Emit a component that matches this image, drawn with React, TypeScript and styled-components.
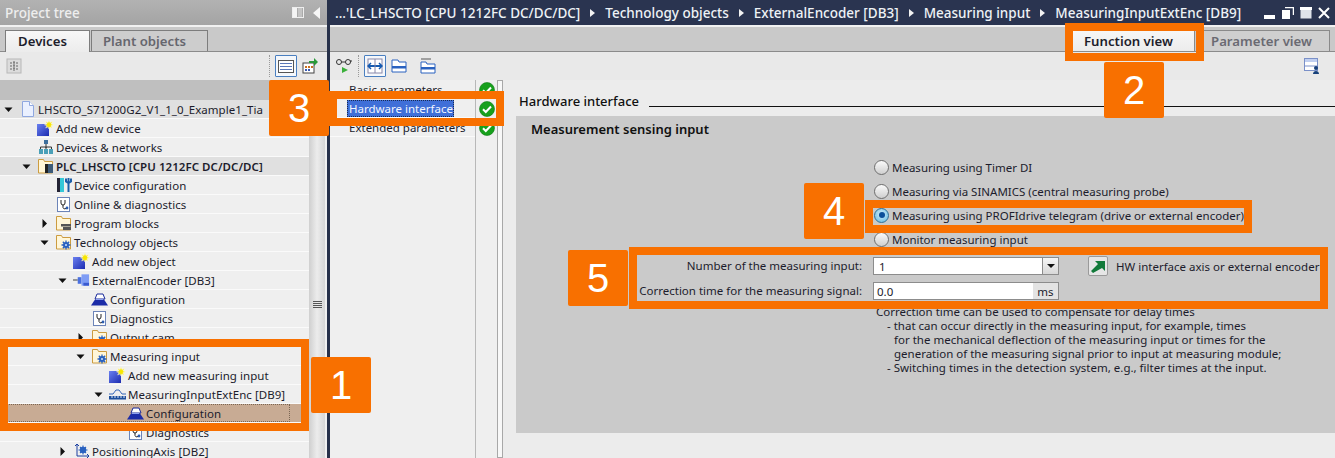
import React from 'react';
import styled, { createGlobalStyle } from 'styled-components';

const Global = createGlobalStyle`
  html, body { margin: 0; padding: 0; background: #ececec; }
  #root { width: 1335px; height: 458px; overflow: hidden; }
`;
const FONT = `"Noto Sans", "DejaVu Sans", sans-serif`;
const ORANGE = '#f87000';

const Page = styled.div`
  position: relative; width: 1335px; height: 458px; overflow: hidden;
  display: flex; font-family: ${FONT}; font-size: 11.5px; color: #1c1c2c;
`;
const LeftPanel = styled.div`width: 327px; flex: none; display: flex; flex-direction: column; background: #ececec;`;
const Divider = styled.div`width: 3px; flex: none; background: #27314a;`;
const RightPanel = styled.div`flex: 1; min-width: 0; display: flex; flex-direction: column; background: #ececec;`;

const ProjectHeader = styled.div`
  height: 25px; flex: none; box-sizing: border-box; padding: 0 5px; display: flex; align-items: center; justify-content: space-between;
  background: linear-gradient(#b2b2b2, #a4a4a4); color: #eeeeee; font-size: 13.5px; font-weight: 500;
`;
const HeaderIcons = styled.div`display: flex; align-items: center; gap: 9px; margin-right: 2px;`;
const TabStrip = styled.div`
  height: 27px; flex: none; box-sizing: border-box; border-top: 2px solid #f1f1f1; border-bottom: 1px solid #8b8b8b;
  background: #c9c9c9; display: flex; align-items: flex-end; padding-left: 5px; gap: 1px;
`;
const TreeTab = styled.div<{ $active?: boolean; $w: number }>`
  width: ${p => p.$w}px; height: ${p => (p.$active ? 22 : 21)}px; box-sizing: border-box; display: flex; align-items: center; justify-content: center;
  padding: 0 10px 1px 0;
  font-size: 13.2px; font-weight: 600; color: ${p => (p.$active ? '#1e1e2c' : '#66666e')};
  border: 1px solid #7d7d7d; border-bottom: 0;
  background: ${p => (p.$active ? 'linear-gradient(#f7f7f7,#ececec)' : '#cdcdcd')};
  margin-bottom: ${p => (p.$active ? -1 : 0)}px; position: relative;
`;
const TreeToolbar = styled.div`
  height: 28px; flex: none; box-sizing: border-box; display: flex; align-items: center; justify-content: space-between; padding: 0 9px 0 6px; background: #e9e9e9;
`;
const ToolGroup = styled.div`display: flex; align-items: center; gap: 5px;`;
const ToolSep = styled.div`width: 0; height: 22px; border-left: 1px dotted #9a9a9a;`;
const ToolGap = styled.span`width: 3px; flex: none;`;
const ToolButton = styled.div<{ $on?: boolean }>`
  width: 22px; height: 22px; box-sizing: border-box; display: flex; align-items: center; justify-content: center;
  border: 1px solid ${p => (p.$on ? '#4a7fc0' : 'transparent')}; background: ${p => (p.$on ? '#f4f7fb' : 'transparent')}; border-radius: 1px;
`;
const GreyBar = styled.div`height: 20px; flex: none; background: #bfbfbf;`;
const TreeArea = styled.div`flex: 1; min-height: 0; display: flex; overflow: hidden;`;
const TreeRows = styled.div`width: 309px; flex: none; position: relative; display: flex; flex-direction: column;`;
const TreeGuide = styled.div`position: absolute; left: 288px; top: 0; bottom: 0; width: 1px; background: #bdbdbd;`;
const TreeRow = styled.div<{ $level: number; $tone?: 'head' | 'selected' }>`
  height: 19px; flex: none; box-sizing: border-box; display: flex; align-items: center; position: relative;
  padding-left: ${p => 4 + p.$level * 18}px; white-space: nowrap; overflow: hidden;
  border-bottom: 1px solid #fafafa;
  background: ${p => (p.$tone === 'head' ? '#e0e0e0' : p.$tone === 'selected' ? '#c8ab94' : '#efefef')};
  ${p => p.$tone === 'selected' ? `&::after { content: ''; position: absolute; left: 0; top: 0; bottom: 0; width: 290px; border: 1px dotted #7a6654; box-sizing: border-box; }` : ''}
`;
const Twisty = styled.span`width: 15px; height: 10px; flex: none; display: flex; align-items: center; justify-content: flex-start;`;
const RowIcon = styled.span`width: 17px; height: 16px; flex: none; margin-right: 2px; display: flex; align-items: center; justify-content: center;`;
const RowText = styled.span<{ $strong?: boolean }>`font-weight: ${p => (p.$strong ? 600 : 400)}; letter-spacing: 0.05px;`;
const ScrollTrack = styled.div`
  flex: 1; display: flex; align-items: center; justify-content: center;
  background: linear-gradient(90deg, #cfcfcf, #ececec 50%, #d6d6d6);
`;
const Grip = styled.div`
  width: 9px; height: 7px; margin-top: 50px;
  background: repeating-linear-gradient(#555 0 1px, transparent 1px 2px);
`;
const LeftEdge = styled.div`width: 2px; flex: none; background: #f0f0f0;`;

const TitleBar = styled.div`
  height: 25px; flex: none; display: flex; align-items: center; justify-content: space-between; padding: 0 5px;
  background: #2a3450; color: #eef2f6; font-size: 13.5px; font-weight: 500; white-space: nowrap;
`;
const Crumbs = styled.div`display: flex; align-items: center; gap: 10px;`;
const CrumbArrow = styled.span`width: 0; height: 0; border-left: 5px solid #f2f2f2; border-top: 4.5px solid transparent; border-bottom: 4.5px solid transparent;`;
const WindowButtons = styled.div`display: flex; align-items: center; gap: 6px;`;
const ViewStrip = styled.div`
  height: 27px; flex: none; box-sizing: border-box; border-top: 2px solid #f1f1f1; border-bottom: 1px solid #8b8b8b; background: #c9c9c9;
  display: flex; justify-content: flex-end; align-items: flex-end; padding-right: 5px; gap: 8px;
`;
const ViewTab = styled.div<{ $active?: boolean; $w: number }>`
  width: ${p => p.$w}px; height: 21px; box-sizing: border-box; display: flex; align-items: center; justify-content: center;
  padding: 0 10px 1px 0;
  font-size: 13.2px; font-weight: 600; color: ${p => (p.$active ? '#1e1e2c' : '#6a6a72')};
  border: 1px solid #8a8a8a; border-bottom: 0; background: ${p => (p.$active ? 'linear-gradient(#f6f6f6,#ececec)' : '#cfcfcf')};
`;
const EditorToolbar = styled.div`
  height: 28px; flex: none; display: flex; align-items: center; justify-content: space-between; padding: 0 15px 0 5px; background: #e9e9e9;
`;
const EditorBody = styled.div`flex: 1; min-height: 0; display: flex;`;
const NavColumn = styled.div`width: 146px; flex: none; box-sizing: border-box; background: #efefef; border-right: 1px solid #b8b8b8; display: flex; flex-direction: column;`;
const NavRow = styled.div`height: 19px; flex: none; box-sizing: border-box; padding-left: 19px; display: flex; align-items: center; border-bottom: 1px solid #fafafa;`;
const NavLabel = styled.span<{ $sel?: boolean }>`
  ${p => p.$sel ? `background:#3f6fd8;color:#f2f6ff;outline:1px dotted #1a2a50;outline-offset:-1px;margin-left:-2px;padding:0 1px 0 2px;` : ''}
  line-height: 17px; white-space: nowrap;
`;
const StatusColumn = styled.div`width: 21px; flex: none; background: #efefef; display: flex; flex-direction: column;`;
const StatusCell = styled.div`height: 19px; flex: none; display: flex; align-items: center; justify-content: center;`;
const NavScroll = styled.div`width: 6px; flex: none; box-sizing: border-box; background: #f8f8f8; border: 1px solid #a8a8a8;`;
const Content = styled.div`flex: 1; min-width: 0; box-sizing: border-box; padding: 11px 0 0 13px; display: flex; flex-direction: column;`;
const SectionHead = styled.div`display: flex; align-items: flex-start; gap: 10px; height: 25px; padding-left: 3px; font-size: 13px; font-weight: 500; color: #101010; line-height: 20px;`;
const HeadLine = styled.div`flex: 1; height: 1px; background: #111; margin-top: 15px;`;
const GreyPanel = styled.div`height: 317px; flex: none; box-sizing: border-box; background: #cacaca; padding-left: 15px; display: flex; flex-direction: column;`;
const PanelTitle = styled.div`height: 26px; display: flex; align-items: center; font-size: 13px; font-weight: 600; color: #101010;`;
const RadioGroup = styled.div`margin: 13px 0 0 343px; display: flex; flex-direction: column;`;
const RadioRow = styled.div`height: 24px; display: flex; align-items: center; gap: 3px; white-space: nowrap;`;
const RadioDot = styled.span<{ $on?: boolean }>`
  width: 15px; height: 15px; box-sizing: border-box; border-radius: 50%; flex: none; display: flex; align-items: center; justify-content: center;
  border: 1px solid ${p => (p.$on ? '#2f6f96' : '#6e6e6e')};
  background: ${p => (p.$on ? 'radial-gradient(circle at 50% 40%, #d5f0fb, #5cb6e0)' : 'linear-gradient(#fafafa,#cfcfcf)')};
  &::after { content: ''; display: ${p => (p.$on ? 'block' : 'none')}; width: 6px; height: 6px; border-radius: 50%; background: #0b4f9a; }
`;
const FormGrid = styled.div`margin-top: 5px; display: grid; grid-template-columns: 331px 186px auto; column-gap: 11px; row-gap: 6px; align-items: center;`;
const FormLabel = styled.div`text-align: right; white-space: nowrap; height: 18px; line-height: 18px;`;
const SelectBox = styled.div`height: 18px; box-sizing: border-box; background: #fff; border: 1px solid #8c8c8c; display: flex; align-items: center; justify-content: space-between; padding-left: 5px;`;
const SelectArrow = styled.div`width: 16px; height: 16px; box-sizing: border-box; border-left: 1px solid #8c8c8c; background: linear-gradient(#f6f6f6,#d8d8d8); display: flex; align-items: center; justify-content: center;
  &::after { content: ''; border-top: 4px solid #111; border-left: 4px solid transparent; border-right: 4px solid transparent; }
`;
const InputBox = styled.div`height: 18px; box-sizing: border-box; background: #fff; border: 1px solid #8c8c8c; display: flex; align-items: center; justify-content: space-between; padding-left: 3px;`;
const UnitBox = styled.div`width: 25px; height: 16px; background: #e3e3e3; display: flex; align-items: center; justify-content: center;`;
const LinkCell = styled.div`display: flex; align-items: center; gap: 8px; white-space: nowrap; margin-left: 18px;`;
const LinkButton = styled.div`width: 20px; height: 20px; box-sizing: border-box; border: 1px solid #9a9a9a; border-radius: 2px; background: #e6e6e6; display: flex; align-items: center; justify-content: center;`;
const Note = styled.div`margin: 5px 0 0 345px; line-height: 14px; white-space: nowrap;`;
const NoteLine = styled.div<{ $indent: number }>`padding-left: ${p => p.$indent}px;`;

const Frame = styled.div<{ $x: number; $y: number; $w: number; $h: number }>`
  position: absolute; left: ${p => p.$x}px; top: ${p => p.$y}px; width: ${p => p.$w}px; height: ${p => p.$h}px;
  box-sizing: border-box; border: 8px solid ${ORANGE}; pointer-events: none;
`;
const Badge = styled.div<{ $x: number; $y: number }>`
  position: absolute; left: ${p => p.$x}px; top: ${p => p.$y}px; width: 60px; height: 56px; border-radius: 2px;
  background: ${ORANGE}; color: #fff; display: flex; align-items: center; justify-content: center;
  font-family: "Liberation Sans", sans-serif; font-size: 40px; line-height: 1;
`;

const Caret = ({ open }: { open: boolean }) => (
  <svg width="9" height="9" viewBox="0 0 9 9">
    {open ? <path d="M.5 2.500h8L4.500 7z" fill="#111" /> : <path d="M2.500 0l4.500 4.500L2.500 9z" fill="#111" />}
  </svg>
);
const NewIcon = () => (
  <svg width="17" height="16" viewBox="0 0 17 16">
    <defs><linearGradient id="ng" x1="0" y1="0" x2="1" y2="1"><stop offset="0" stopColor="#6a80f0" /><stop offset="1" stopColor="#1c2cb0" /></linearGradient></defs>
    <rect x="0" y="4" width="12" height="12" fill="url(#ng)" />
    <path d="M12 0l.9 2.600 2.600-1.100L14 4l2.600.8L14 5.700l1.300 2.500-2.400-1.300L12 9l-.9-2.200L8.700 8l1.200-2.300-2.400-.9L10 4 8.700 1.500l2.400 1.100z" fill="#f7e600" stroke="#fffbe0" strokeWidth=".5" />
  </svg>
);
const NetIcon = () => (
  <svg width="16" height="16" viewBox="0 0 16 16">
    <rect x="6" y="1" width="4" height="4" fill="#3c6e9c" />
    <path d="M8 5v4M2.500 10V8h11v2M8 8v2" stroke="#333" fill="none" />
    <rect x="1" y="10" width="4" height="5" fill="#4aa0b8" /><rect x="6" y="10" width="4" height="5" fill="#4aa0b8" /><rect x="11" y="10" width="4" height="5" fill="#4aa0b8" />
  </svg>
);
const Folder = ({ children }: { children?: React.ReactNode }) => (
  <svg width="17" height="16" viewBox="0 0 17 16">
    <path d="M1.500 15V1.500h5l1 2h8V15z" fill="#fff6d8" stroke="#cc9c40" />
    {children}
  </svg>
);
const GearFolder = () => (
  <Folder>
    <circle cx="11" cy="11" r="3" fill="#2a62c0" />
    <path d="M11 6.500v9M6.500 11h9M7.800 7.800l6.400 6.400M14.200 7.800l-6.400 6.400" stroke="#2a62c0" strokeWidth="1.300" />
    <circle cx="11" cy="11" r="1" fill="#cfe4ff" />
  </Folder>
);
const PlcFolder = () => (
  <Folder><rect x="8" y="6" width="3" height="9" fill="#222" /><rect x="11" y="6" width="5" height="9" fill="#3c5a78" /></Folder>
);
const BlocksFolder = () => (
  <Folder><rect x="6" y="9" width="10" height="2.500" fill="#555" /><rect x="8" y="12" width="8" height="3" fill="#555" /></Folder>
);
const ProjectDoc = () => (
  <svg width="14" height="16" viewBox="0 0 14 16"><path d="M1.500 .5h7l4 4v11h-11z" fill="#eaf0ff" stroke="#90a8e0" /><path d="M8.500 .5v4h4" fill="#fff" stroke="#90a8e0" /></svg>
);
const DevConfig = () => (
  <svg width="16" height="16" viewBox="0 0 16 16">
    <rect x="1" y="1" width="3" height="14" fill="#223" /><rect x="4" y="1" width="4" height="14" fill="#35c8d8" />
    <path d="M12.500 1v4M10 1.500v3l2.500 1.500L15 4.500v-3M12.500 6v9" stroke="#1a5ea8" strokeWidth="2" fill="none" />
  </svg>
);
const DiagIcon = () => (
  <svg width="13" height="15" viewBox="0 0 13 15">
    <rect x=".5" y=".5" width="12" height="14" fill="#fff" stroke="#6c84b8" />
    <path d="M4 3v3a2 2 0 004 0V3M6 8v2.500a2 2 0 003 1" stroke="#222" fill="none" />
    <circle cx="10" cy="11" r="1.400" fill="#2a5cb0" />
  </svg>
);
const ConfigIcon = () => (
  <svg width="17" height="13" viewBox="0 0 17 13">
    <path d="M4 6l2-5h6l2 5z" fill="#fff" stroke="#1a2a9a" />
    <path d="M0 12.500l4-6h9l4 6z" fill="#1c2ca8" />
    <path d="M5 6.500h7" stroke="#8ca0f0" />
  </svg>
);
const EncoderIcon = () => (
  <svg width="18" height="16" viewBox="0 0 18 16">
    <path d="M0 8h5" stroke="#333" /><rect x="5" y="5" width="4" height="7" fill="#4a70e0" /><rect x="9" y="2" width="8" height="12" fill="#7e9cf4" /><rect x="11" y="11" width="6" height="3" fill="#3a5ad0" />
  </svg>
);
const MeasureIcon = () => (
  <svg width="17" height="12" viewBox="0 0 17 12">
    <path d="M0 6h4l3-4h3l3 4h4" stroke="#3566b8" fill="none" /><rect x="0" y="8" width="17" height="3.500" fill="#1d4f9c" />
    <path d="M3 8v2M6 8v2M9 8v2M12 8v2M15 8v2" stroke="#dfe8f8" />
  </svg>
);
const AxisIcon = () => (
  <svg width="16" height="16" viewBox="0 0 16 16">
    <path d="M3 1v12h12M1 3l2-2 2 2M13 11l2 2-2 2" stroke="#1a3fa0" fill="none" />
    <circle cx="9" cy="7" r="3.200" fill="#2a62c0" />
    <path d="M9 2.500v9M4.500 7h9M6 4l6 6M12 4l-6 6" stroke="#2a62c0" strokeWidth="1.100" />
  </svg>
);
const Check = () => (
  <svg width="16" height="16" viewBox="0 0 16 16">
    <circle cx="8" cy="8" r="7.500" fill="#17a01c" stroke="#0d7a14" strokeWidth=".6" />
    <path d="M4 8.200l2.800 2.800L12 5.500" stroke="#fff" strokeWidth="2" fill="none" />
  </svg>
);

type Row = { l: number; c?: boolean; i?: React.ReactNode; t: string; strong?: boolean; tone?: 'head' | 'selected' };
const rows: Row[] = [
  { l: 0, c: true, i: <ProjectDoc />, t: 'LHSCTO_S71200G2_V1_1_0_Example1_Tia', tone: 'head' },
  { l: 1, i: <NewIcon />, t: 'Add new device' },
  { l: 1, i: <NetIcon />, t: 'Devices & networks' },
  { l: 1, c: true, i: <PlcFolder />, t: 'PLC_LHSCTO [CPU 1212FC DC/DC/DC]', strong: true, tone: 'head' },
  { l: 2, i: <DevConfig />, t: 'Device configuration' },
  { l: 2, i: <DiagIcon />, t: 'Online & diagnostics' },
  { l: 2, c: false, i: <BlocksFolder />, t: 'Program blocks' },
  { l: 2, c: true, i: <GearFolder />, t: 'Technology objects' },
  { l: 3, i: <NewIcon />, t: 'Add new object' },
  { l: 3, c: true, i: <EncoderIcon />, t: 'ExternalEncoder [DB3]' },
  { l: 4, i: <ConfigIcon />, t: 'Configuration' },
  { l: 4, i: <DiagIcon />, t: 'Diagnostics' },
  { l: 4, c: false, i: <GearFolder />, t: 'Output cam' },
  { l: 4, c: true, i: <GearFolder />, t: 'Measuring input' },
  { l: 5, i: <NewIcon />, t: 'Add new measuring input' },
  { l: 5, c: true, i: <MeasureIcon />, t: 'MeasuringInputExtEnc [DB9]' },
  { l: 6, i: <ConfigIcon />, t: 'Configuration', tone: 'selected' },
  { l: 6, i: <DiagIcon />, t: 'Diagnostics' },
  { l: 3, c: false, i: <AxisIcon />, t: 'PositioningAxis [DB2]' },
];
const crumbs = ["...'LC_LHSCTO [CPU 1212FC DC/DC/DC]", 'Technology objects', 'ExternalEncoder [DB3]', 'Measuring input', 'MeasuringInputExtEnc [DB9]'];
const radios = ['Measuring using Timer DI', 'Measuring via SINAMICS (central measuring probe)', 'Measuring using PROFIdrive telegram (drive or external encoder)', 'Monitor measuring input'];
const note: [number, string][] = [
  [0, 'Correction time can be used to compensate for delay times'],
  [11, '- that can occur directly in the measuring input, for example, times'],
  [18, 'for the mechanical deflection of the measuring input or times for the'],
  [18, 'generation of the measuring signal prior to input at measuring module;'],
  [11, '- Switching times in the detection system, e.g., filter times at the input.'],
];

export default function App() {
  return (
    <Page>
      <Global />
      <LeftPanel>
        <ProjectHeader>
          <span>Project tree</span>
          <HeaderIcons>
            <svg width="12" height="12" viewBox="0 0 12 12"><rect x=".5" y=".5" width="11" height="10" fill="none" stroke="#eee" /><rect x="1" y="1" width="4" height="9" fill="#f4f4f4" /><path d="M7 1v9M9 1v9" stroke="#ddd" /></svg>
            <svg width="7" height="12" viewBox="0 0 7 12"><path d="M7 0v12L0 6z" fill="#f6f6f6" /></svg>
          </HeaderIcons>
        </ProjectHeader>
        <TabStrip>
          <TreeTab $active $w={85}>Devices</TreeTab>
          <TreeTab $w={117}>Plant objects</TreeTab>
        </TabStrip>
        <TreeToolbar>
          <svg width="16" height="16" viewBox="0 0 16 16"><rect x="1" y="1" width="14" height="14" fill="#dcdcdc" stroke="#b8b8b8" /><path d="M4 5h8M4 8h8M4 11h8M8 3v10" stroke="#666" strokeDasharray="2 1" /></svg>
          <ToolGroup>
            <ToolSep />
            <ToolButton $on>
              <svg width="16" height="13" viewBox="0 0 16 13"><rect x=".5" y=".5" width="15" height="12" fill="#fff" stroke="#555" /><path d="M2 3h12v1H2zM2 6h12v1H2zM2 9h12v1H2z" fill="#5a78b8" /></svg>
            </ToolButton>
            <svg width="16" height="16" viewBox="0 0 16 16"><rect x="1" y="5" width="11" height="10" fill="#fff" stroke="#444" /><path d="M3 8h2v2H3zM6 8h2v2H6zM9 8h2v2H9z" fill="#c87020" /><path d="M3 11h2v2H3zM6 11h2v2H6z" fill="#3a5ab0" /><path d="M7 3h5V0l4 4-4 4V5H7z" fill="#2a9a3a" /></svg>
          </ToolGroup>
        </TreeToolbar>
        <GreyBar />
        <TreeArea>
          <TreeRows>
            <TreeGuide />
            {rows.map((r, i) => (
              <TreeRow key={i} $level={r.l} $tone={r.tone}>
                <Twisty>{r.c !== undefined && <Caret open={r.c} />}</Twisty>
                <RowIcon>{r.i}</RowIcon>
                <RowText $strong={r.strong}>{r.t}</RowText>
              </TreeRow>
            ))}
          </TreeRows>
          <ScrollTrack><Grip /></ScrollTrack>
          <LeftEdge />
        </TreeArea>
      </LeftPanel>
      <Divider />
      <RightPanel>
        <TitleBar>
          <Crumbs>
            {crumbs.map((c, i) => (
              <React.Fragment key={c}>
                {i > 0 && <CrumbArrow />}
                <span>{c}</span>
              </React.Fragment>
            ))}
          </Crumbs>
          <WindowButtons>
            <svg width="12" height="12" viewBox="0 0 12 12"><rect y="8" width="11" height="4" fill="#fff" /></svg>
            <svg width="12" height="12" viewBox="0 0 12 12"><rect x="0" y="3" width="8" height="9" fill="#fff" /><path d="M3 .500h8.500V8" stroke="#fff" strokeWidth="1.500" fill="none" /></svg>
            <svg width="12" height="12" viewBox="0 0 12 12"><rect x="0" y="0" width="12" height="3" fill="#fff" /><rect x=".5" y="3" width="11" height="8.500" fill="#dfe3ea" /></svg>
            <svg width="12" height="12" viewBox="0 0 12 12"><path d="M1 1l10 10M11 1L1 11" stroke="#fff" strokeWidth="2" /></svg>
          </WindowButtons>
        </TitleBar>
        <ViewStrip>
          <ViewTab $active $w={123}>Function view</ViewTab>
          <ViewTab $w={127}>Parameter view</ViewTab>
        </ViewStrip>
        <EditorToolbar>
          <ToolGroup>
            <svg width="18" height="18" viewBox="0 0 18 18"><circle cx="4" cy="5" r="2.500" fill="none" stroke="#333" /><circle cx="13" cy="5" r="2.500" fill="none" stroke="#333" /><path d="M6.500 5h4M15 4h2" stroke="#333" /><path d="M7 10l6 3-6 3z" fill="#3ab03a" /></svg>
            <ToolSep />
            <ToolButton $on>
              <svg width="16" height="16" viewBox="0 0 16 16"><rect x="1" y="1" width="14" height="14" fill="#fff" stroke="#88a" /><path d="M1 8h14" stroke="#155ab0" strokeWidth="2" /><path d="M4 5L1 8l3 3M12 5l3 3-3 3" stroke="#155ab0" fill="none" strokeWidth="1.500" /><path d="M8 1v14" stroke="#88a" /></svg>
            </ToolButton>
            <svg width="16" height="14" viewBox="0 0 16 14"><path d="M1 1h6l1 2h7v10H1z" fill="#fff" stroke="#2a62c0" /><rect x="1" y="7" width="14" height="2.500" fill="#2a62c0" /></svg>
            <ToolGap />
            <svg width="16" height="16" viewBox="0 0 16 16"><path d="M1 1h10" stroke="#888" strokeWidth="1.500" /><path d="M1 4h5l1 2h8v9H1z" fill="#fff" stroke="#2a62c0" /><rect x="1" y="9" width="14" height="2.500" fill="#2a62c0" /></svg>
          </ToolGroup>
          <svg width="16" height="16" viewBox="0 0 16 16"><rect x=".5" y=".5" width="13" height="12" fill="#fff" stroke="#7a90c8" /><rect x="1" y="1" width="12" height="3" fill="#c0cff0" /><path d="M1 8h12" stroke="#7a90c8" /><circle cx="12" cy="10" r="2" fill="#17407a" /><path d="M9 16c0-4 6-4 6 0z" fill="#17407a" /></svg>
        </EditorToolbar>
        <EditorBody>
          <NavColumn>
            <NavRow><NavLabel>Basic parameters</NavLabel></NavRow>
            <NavRow><NavLabel $sel>Hardware interface</NavLabel></NavRow>
            <NavRow><NavLabel>Extended parameters</NavLabel></NavRow>
          </NavColumn>
          <StatusColumn>
            <StatusCell><Check /></StatusCell>
            <StatusCell><Check /></StatusCell>
            <StatusCell><Check /></StatusCell>
          </StatusColumn>
          <NavScroll />
          <Content>
            <SectionHead><span>Hardware interface</span><HeadLine /></SectionHead>
            <GreyPanel>
              <PanelTitle>Measurement sensing input</PanelTitle>
              <RadioGroup>
                {radios.map((r, i) => (
                  <RadioRow key={r}><RadioDot $on={i === 2} /><span>{r}</span></RadioRow>
                ))}
              </RadioGroup>
              <FormGrid>
                <FormLabel>Number of the measuring input:</FormLabel>
                <SelectBox><span>1</span><SelectArrow /></SelectBox>
                <LinkCell>
                  <LinkButton><svg width="16" height="16" viewBox="0 0 16 16"><path d="M3 15l-2-2 7-7-3-3h10v10l-3-3z" fill="#127a3a" /></svg></LinkButton>
                  <span>HW interface axis or external encoder</span>
                </LinkCell>
                <FormLabel>Correction time for the measuring signal:</FormLabel>
                <InputBox><span>0.0</span><UnitBox>ms</UnitBox></InputBox>
              </FormGrid>
              <Note>
                {note.map(([n, t]) => <NoteLine key={t} $indent={n}>{t}</NoteLine>)}
              </Note>
            </GreyPanel>
          </Content>
        </EditorBody>
      </RightPanel>

      <Frame $x={0} $y={339} $w={309} $h={92} />
      <Frame $x={329} $y={91} $w={175} $h={35} />
      <Frame $x={1065} $y={23} $w={139} $h={38} />
      <Frame $x={865} $y={200} $w={387} $h={33} />
      <Frame $x={629} $y={247} $w={699} $h={62} />
      <Badge $x={311} $y={357}>1</Badge>
      <Badge $x={1104} $y={62}>2</Badge>
      <Badge $x={269} $y={80}>3</Badge>
      <Badge $x={804} $y={183}>4</Badge>
      <Badge $x={568} $y={250}>5</Badge>
    </Page>
  );
}
